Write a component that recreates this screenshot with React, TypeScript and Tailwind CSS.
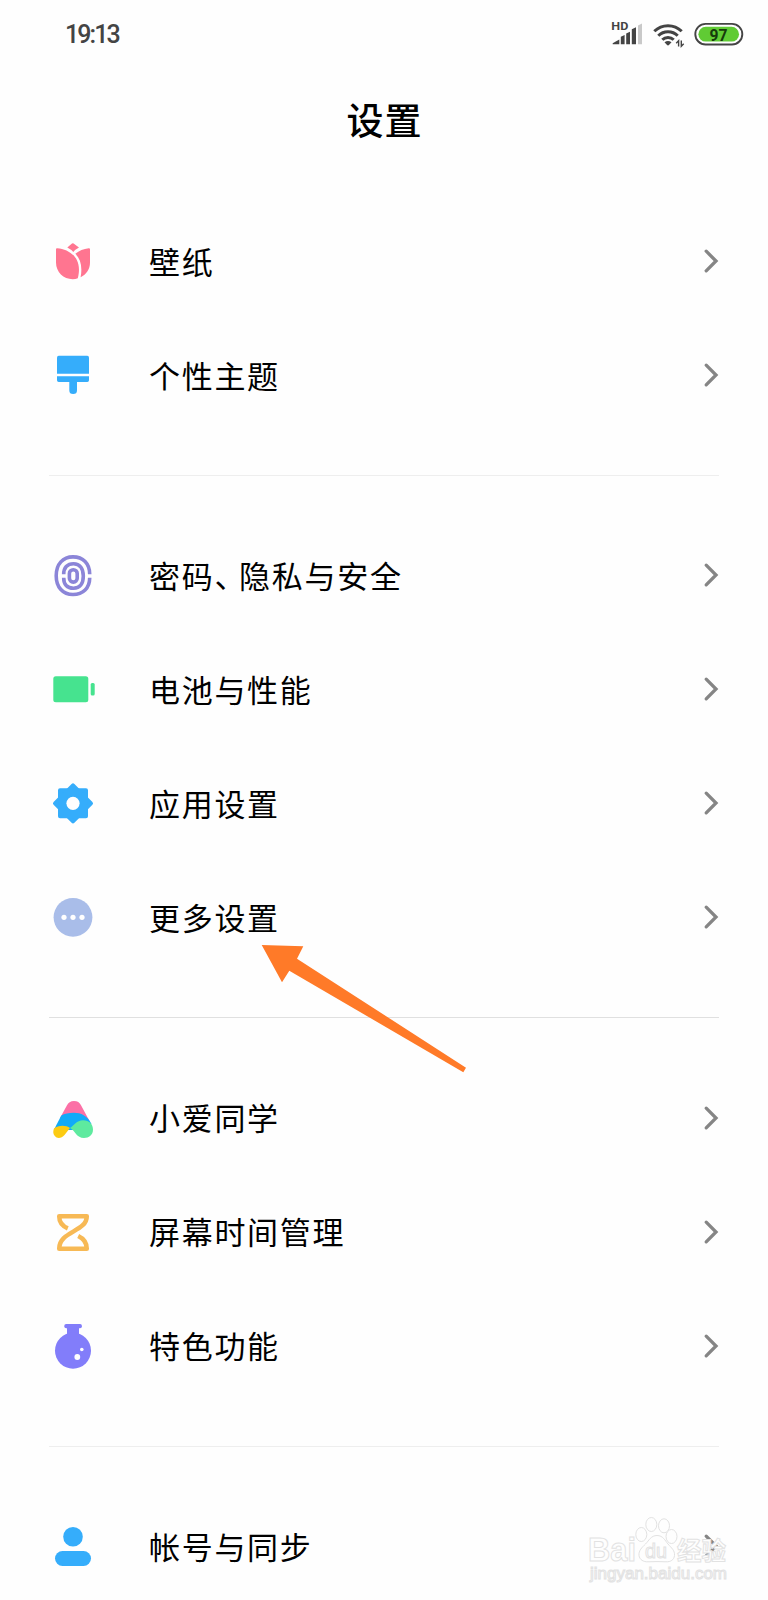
import React from 'react';

interface SettingItem {
  label: React.ReactNode;
  icon: React.ReactNode;
}

const TulipIcon = () => (
  <g fill="#ff7590">
    <path d="M23 6.5q.8-.7 1.6 0l5.4 3.9q-3.5 1.8-5.7 4.5-2.400-2.700-6-4.500z" />
    <path d="M7 12.300q0-1.300 1.300-1.100C21 12.500 34 21 28.800 41.200Q26.500 42.200 23.700 42.200C14.500 42.200 7 35 7 25.500z" />
    <path d="M41 12.300q0-1.300-1.300-1.100Q32 12 26.300 16.800C31.800 22 33.500 30 31.600 40.200 37.500 37.500 41 32 41 25.500z" />
  </g>
);

const BrushIcon = () => (
  <g fill="#35adfb">
    <path d="M9.700 4.700h28.600q1.700 0 1.700 1.700v16.400H8V6.400q0-1.700 1.700-1.700z" />
    <path d="M8 25.300h32v4q0 1.700-1.700 1.700H28v8.200a3.850 3.850 0 0 1-7.700 0V31H9.700Q8 31 8 29.300z" />
  </g>
);

const FingerprintIcon = () => (
  <g fill="none" stroke="#8b85d8" strokeWidth="3.6">
    <path d="M40.700 23.300C40.700 12.500 34 5.900 24 5.900S7.200 13 7.200 24.700 14 43.500 24 43.500 40.700 37 40.700 26.700" />
    <path d="M14.700 23.300C14.700 16.800 18.200 12.700 24.500 12.700S34.300 17.500 34.300 25 31 37.300 24.500 37.300 14.700 33.500 14.700 26.700" />
    <rect x="20.400" y="18.700" width="7.800" height="12.400" rx="3.900" />
  </g>
);

const BatteryIcon = () => (
  <g fill="#46e38f">
    <rect x="4.300" y="11.300" width="35" height="25.900" rx="2.500" />
    <rect x="41.700" y="18" width="4" height="12.400" rx="1.500" />
  </g>
);

const GearIcon = () => (
  <g>
    <g fill="#35adfb" stroke="#35adfb" strokeWidth="4" strokeLinejoin="round">
      <rect x="11" y="11.300" width="26" height="26" />
      <path d="M24 6.300l18 18-18 18-18-18z" />
    </g>
    <circle cx="24" cy="24.300" r="6.600" fill="#fefefe" />
  </g>
);

const MoreIcon = () => (
  <g>
    <circle cx="24" cy="24.300" r="19.400" fill="#a9bde9" />
    <g fill="#fefefe">
      <circle cx="15" cy="24.300" r="2.600" />
      <circle cx="24" cy="24.300" r="2.600" />
      <circle cx="33" cy="24.300" r="2.600" />
    </g>
  </g>
);

const AssistantIcon = () => (
  <g>
    <path d="M25 7C21.500 7 19.300 8.800 18 11.300L11 24l14 2 15.500 1L32 11.300C30.700 8.500 28.500 7 25 7z" fill="#fb70a6" />
    <path d="M12.300 21.500Q17 18.800 25 18.800C32 18.800 38 21.500 42.500 30L33 36H4.800z" fill="#12aaf8" />
    <path d="M5 34.500C9 31 17 30.800 21 34L15.500 41C12.500 44.500 8 44.800 5.800 42 3.800 39.500 4 37 5 34.500z" fill="#fccb12" />
    <path d="M21 34C25 31.500 27.500 26.500 34 26.300 40 26.200 44 30 44 35.500S40 44 35 44C27.500 44 26.500 37 21 34z" fill="#5eea9f" />
  </g>
);

const HourglassIcon = () => (
  <path
    d="M18.800 20.300C12.800 17.800 10.200 14 10.200 8.200H37.800C37.800 24 10.200 23 10.200 40.800H37.800C37.800 34.500 35.200 30.800 29.200 28"
    fill="none"
    stroke="#f7b955"
    strokeWidth="4.500"
    strokeLinejoin="round"
  />
);

const FlaskIcon = () => (
  <g>
    <g fill="#827dfa">
      <rect x="15.300" y="2" width="17.600" height="4.200" rx="1.800" />
      <path d="M18 5h12v10H18z" />
      <circle cx="24" cy="28.700" r="18" />
    </g>
    <circle cx="28.300" cy="35" r="2.900" fill="#fefefe" />
    <circle cx="32.800" cy="27.500" r="1.800" fill="#fefefe" />
  </g>
);

const PersonIcon = () => (
  <g fill="#35adfb">
    <circle cx="24" cy="14.800" r="9.800" />
    <rect x="6" y="29" width="36" height="15" rx="7.500" />
  </g>
);

const groups: SettingItem[][] = [
  [
    { label: '壁纸', icon: <TulipIcon /> },
    { label: '个性主题', icon: <BrushIcon /> },
  ],
  [
    {
      label: (
        <>
          密码<span className="tracking-[-6.3px]">、</span>隐私与安全
        </>
      ),
      icon: <FingerprintIcon />,
    },
    { label: '电池与性能', icon: <BatteryIcon /> },
    { label: '应用设置', icon: <GearIcon /> },
    { label: '更多设置', icon: <MoreIcon /> },
  ],
  [
    { label: '小爱同学', icon: <AssistantIcon /> },
    { label: '屏幕时间管理', icon: <HourglassIcon /> },
    { label: '特色功能', icon: <FlaskIcon /> },
  ],
  [{ label: '帐号与同步', icon: <PersonIcon /> }],
];

const StatusBar = () => (
  <header className="flex h-[68px] items-center justify-between pl-[65px] pr-4">
    <span className="pt-0.5 font-[Roboto] text-[25px] font-medium tracking-[-1.900px] text-[#444]">19:13</span>
    <svg className="mb-0.5" width="144" height="32" viewBox="0 0 144 32" fill="none">
      <text
        x="3.300"
        y="13.300"
        fontSize="10.500"
        fontWeight="700"
        fontFamily="Roboto, sans-serif"
        fill="#444"
        textLength="17"
        lengthAdjust="spacingAndGlyphs"
      >
        HD
      </text>
      <g fill="#444">
        <path d="M4.700 27.300v-1l6.600-3.700v4.700z" />
        <path d="M12.800 27.300v-7.600l3.800-1.700v9.300z" />
        <path d="M18.200 27.300V16.500l3.800-1.800v12.600z" />
        <path d="M23.800 27.300V12.300l4.200-2v17z" />
        <path d="M30 27.300V8.500l4-2v20.800z" fill="#c9c9c9" />
      </g>
      <g stroke="#444" strokeWidth="3">
        <path d="M46.300 14.300a19.500 19.500 0 0 1 27.400 0" />
        <path d="M50.300 18.800a13.700 13.700 0 0 1 19.400 0" />
        <path d="M54.300 22.800a8 8 0 0 1 11.400 0" />
      </g>
      <path d="M56.500 25.300q3.500-2.800 7 0l-2.300 2.500q-1.200 1.200-2.400 0z" fill="#444" />
      <path d="M70.600 29.500v-5.800l-2.400 2.500M73.300 23.500v5.800l2.400-2.500" stroke="#444" strokeWidth="1.400" />
      <rect x="87.300" y="6.900" width="47" height="20.600" rx="10.300" stroke="#444" strokeWidth="1.900" />
      <rect x="90.400" y="9.800" width="40.600" height="14.800" rx="7.400" fill="#60cb34" />
      <text
        x="101.500"
        y="24"
        fontSize="17"
        fontWeight="700"
        fontFamily="Roboto, sans-serif"
        fill="#163a0c"
        textLength="18"
        lengthAdjust="spacingAndGlyphs"
      >
        97
      </text>
    </svg>
  </header>
);

const SettingRow: React.FC<SettingItem> = ({ label, icon }) => (
  <li className="flex h-[114px] items-center px-[49px]">
    <svg className="h-12 w-12 shrink-0" viewBox="0 0 48 48">
      {icon}
    </svg>
    <span className="mb-0.5 ml-[52px] flex-1 text-[31px] leading-none tracking-[1.700px] whitespace-nowrap text-black">
      {label}
    </span>
    <svg width="16" height="26" viewBox="0 0 16 26" fill="none" stroke="#858585" strokeWidth="3.300" strokeLinecap="round">
      <path d="M3.200 3.200L13 13l-9.800 9.800" />
    </svg>
  </li>
);

// Orange pointer laid over the list
const PointerArrow = () => (
  <svg className="pointer-events-none absolute top-[940px] left-[256px]" width="216" height="140" viewBox="256 940 216 140">
    <path d="M261.700 945L303.300 946.300 297 958.700 466 1067.700 463.300 1072.300 289.300 970.700 282 982.300z" fill="#ff7a28" />
  </svg>
);

const Watermark = () => (
  <svg
    className="pointer-events-none absolute top-[1500px] left-[580px]"
    width="160"
    height="100"
    viewBox="580 1500 160 100"
    fill="#fefefe"
    stroke="#e2e2e2"
    strokeWidth="1"
    fontFamily="'Liberation Sans', 'Noto Sans CJK SC', sans-serif"
    fontWeight="700"
  >
    <text x="588" y="1561" fontSize="33" textLength="48" lengthAdjust="spacingAndGlyphs">
      Bai
    </text>
    <ellipse cx="641.300" cy="1534.500" rx="5.500" ry="7" />
    <ellipse cx="651.300" cy="1524.500" rx="5.500" ry="7" />
    <ellipse cx="664" cy="1525.800" rx="5.500" ry="7" />
    <ellipse cx="671.500" cy="1536.500" rx="5.500" ry="7" />
    <path d="M657 1535.500c6 0 8 5 11 8.500 3.500 4 7 6.500 6.500 11.500-.5 4.500-4 6.500-8.500 6.300-6-.3-12-.3-18 0-4.500.2-8.500-2-9-6.300-.5-5 3-8 6.500-11.500 3.500-3.500 5.500-8.500 11.500-8.500z" />
    <text x="645" y="1558" fontSize="20" fontWeight="400" textLength="22" lengthAdjust="spacingAndGlyphs">
      du
    </text>
    <text x="677" y="1560" fontSize="25" textLength="49" lengthAdjust="spacingAndGlyphs">
      经验
    </text>
    <text x="590" y="1578.700" fontSize="16.500" fontWeight="400" textLength="137" lengthAdjust="spacingAndGlyphs">
      jingyan.baidu.com
    </text>
  </svg>
);

export default function App() {
  return (
    <div className="relative h-[1600px] w-[768px] overflow-hidden bg-[#fefefe] font-['Noto_Sans_CJK_SC',sans-serif]">
      <StatusBar />
      <h1 className="flex h-[136px] items-start justify-center pt-8 pl-px text-[37px] leading-[38px] font-medium tracking-[1px] text-black">
        设置
      </h1>
      {groups.map((items, i) => (
        <React.Fragment key={i}>
          {i > 0 && (
            <hr className={`mx-[49px] mt-[43px] mb-[42.4px] ${i === 2 ? 'border-[#e0e0e0]' : 'border-[#eeeeee]'}`} />
          )}
          <ul>
            {items.map((item, j) => (
              <SettingRow key={j} {...item} />
            ))}
          </ul>
        </React.Fragment>
      ))}
      <PointerArrow />
      <Watermark />
    </div>
  );
}
